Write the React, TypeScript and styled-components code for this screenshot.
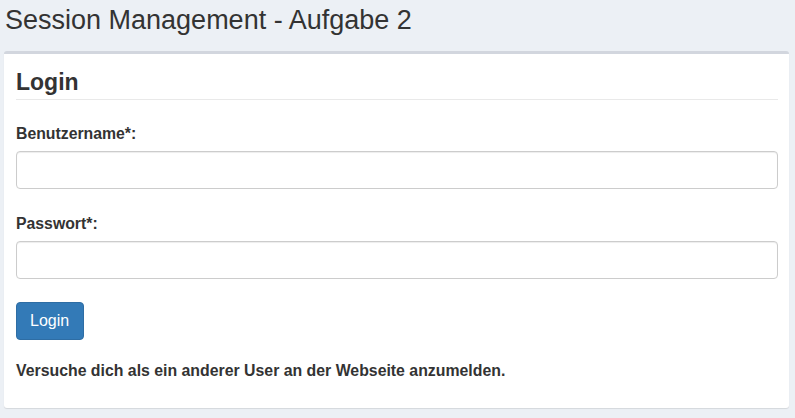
import React from "react";
import styled, { createGlobalStyle } from "styled-components";

const Global = createGlobalStyle`
  html, body { margin: 0; padding: 0; background: #ecf0f5; }
  body { font-family: "Liberation Sans", Arial, sans-serif; color: #333; }
  * { box-sizing: border-box; }
`;

const Page = styled.div`
  padding: 5px 6px 10px 4px;
`;

const Title = styled.h1`
  margin: 0 0 15px 1px;
  font-size: 27px;
  font-weight: 400;
  line-height: 31px;
  color: #333;
`;

const Card = styled.section`
  background: #fff;
  border-top: 3px solid #d2d6de;
  border-radius: 3px;
  box-shadow: 0 1px 1px rgba(0, 0, 0, 0.1);
  padding: 16px 11px 27px 12px;
`;

const Heading = styled.h3`
  margin: 0 0 24px;
  padding-bottom: 4px;
  font-size: 23px;
  font-weight: 700;
  line-height: 25px;
  border-bottom: 1px solid #e9e9e9;
`;

const Field = styled.div<{ $gap: number }>`
  display: flex;
  flex-direction: column;
  margin-bottom: ${(p) => p.$gap}px;
`;

const Label = styled.label`
  font-size: 15.8px;
  font-weight: 700;
  line-height: 20px;
  margin-bottom: 7px;
`;

const Input = styled.input`
  height: 38px;
  width: 100%;
  border: 1px solid #ccc;
  border-radius: 4px;
  box-shadow: inset 0 1px 1px rgba(0, 0, 0, 0.075);
  padding: 6px 12px;
  font-size: 16px;
  font-family: inherit;
`;

const Button = styled.button`
  align-self: flex-start;
  height: 38px;
  padding: 0 14px 0 13px;
  background: #337ab7;
  border: 1px solid #2e6da4;
  border-radius: 4px;
  color: #fff;
  font-size: 16px;
  font-family: inherit;
  line-height: 20px;
`;

const Hint = styled.p`
  margin: 21px 0 0;
  font-size: 15.85px;
  font-weight: 700;
  line-height: 20px;
`;

export default function App() {
  return (
    <Page>
      <Global />
      <Title>Session Management - Aufgabe 2</Title>
      <Card>
        <Heading>Login</Heading>
        <Field $gap={25}>
          <Label>Benutzername*:</Label>
          <Input type="text" />
        </Field>
        <Field $gap={23}>
          <Label>Passwort*:</Label>
          <Input type="password" />
        </Field>
        <Field $gap={0}>
          <Button>Login</Button>
        </Field>
        <Hint>Versuche dich als ein anderer User an der Webseite anzumelden.</Hint>
      </Card>
    </Page>
  );
}
